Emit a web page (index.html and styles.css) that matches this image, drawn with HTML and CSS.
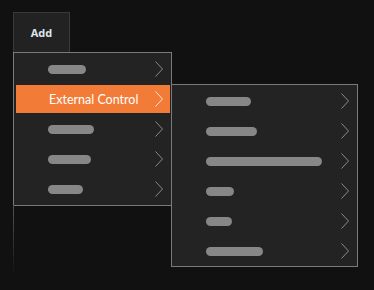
FILE: index.html
```html
<!DOCTYPE html>
<html lang="en">
  <head>
    <title>Add menu</title>
    <meta charset="utf-8">
    <link rel="stylesheet" href="styles.css">
  </head>
  <body>

  <div class="tab">Add</div>

  <div class="menu">
    <div class="item"><span class="bar" style="width:38px"></span><svg class="chev" viewBox="0 0 8 16"><polyline points="0.5,0.5 7.5,8 0.5,15.5"/></svg></div>
    <div class="item active"><span class="label">External Control</span><svg class="chev" viewBox="0 0 8 16"><polyline points="0.5,0.5 7.5,8 0.5,15.5"/></svg></div>
    <div class="item"><span class="bar" style="width:46px"></span><svg class="chev" viewBox="0 0 8 16"><polyline points="0.5,0.5 7.5,8 0.5,15.5"/></svg></div>
    <div class="item"><span class="bar" style="width:43px"></span><svg class="chev" viewBox="0 0 8 16"><polyline points="0.5,0.5 7.5,8 0.5,15.5"/></svg></div>
    <div class="item"><span class="bar" style="width:35px"></span><svg class="chev" viewBox="0 0 8 16"><polyline points="0.5,0.5 7.5,8 0.5,15.5"/></svg></div>

    <div class="menu submenu">
      <div class="item"><span class="bar" style="width:45px"></span><svg class="chev" viewBox="0 0 8 16"><polyline points="0.5,0.5 7.5,8 0.5,15.5"/></svg></div>
      <div class="item"><span class="bar" style="width:51px"></span><svg class="chev" viewBox="0 0 8 16"><polyline points="0.5,0.5 7.5,8 0.5,15.5"/></svg></div>
      <div class="item"><span class="bar" style="width:116px"></span><svg class="chev" viewBox="0 0 8 16"><polyline points="0.5,0.5 7.5,8 0.5,15.5"/></svg></div>
      <div class="item"><span class="bar" style="width:28px"></span><svg class="chev" viewBox="0 0 8 16"><polyline points="0.5,0.5 7.5,8 0.5,15.5"/></svg></div>
      <div class="item"><span class="bar" style="width:26px"></span><svg class="chev" viewBox="0 0 8 16"><polyline points="0.5,0.5 7.5,8 0.5,15.5"/></svg></div>
      <div class="item"><span class="bar" style="width:57px"></span><svg class="chev" viewBox="0 0 8 16"><polyline points="0.5,0.5 7.5,8 0.5,15.5"/></svg></div>
    </div>
  </div>

  </body>
</html>
```

FILE: styles.css
```css
html {
  height: 100%;
}
body {
  margin: 0;
  padding: 12px 0 0 13px;
  background: #111111;
  color: #ffffff;
  font-family: "Open Sans", sans-serif;
  font-size: 12px;
  height: 100%;
  box-sizing: border-box;
}

.tab {
  width: 57px;
  height: 40px;
  box-sizing: border-box;
  border: 1px solid #3a3a3a;
  border-bottom: 0;
  background: #222222;
  color: #dfe6ee;
  font-size: 11px;
  font-weight: bold;
  display: flex;
  align-items: center;
  justify-content: center;
}

.menu {
  position: relative;
  width: 159px;
  box-sizing: border-box;
  border: 1px solid #7a7a7a;
  background: #232323;
  padding: 0 0 2px;
}
.menu::after {
  content: "";
  position: absolute;
  top: 100%;
  left: -1px;
  width: 1px;
  height: 70px;
  background: linear-gradient(#555555, rgba(85, 85, 85, 0));
}

.item {
  height: 30px;
  box-sizing: border-box;
  border: solid transparent;
  border-width: 2px 1px 0 2px;
  background-clip: padding-box;
  padding: 0 7px 0 32px;
  display: flex;
  align-items: center;
  white-space: nowrap;
}
.item.active {
  background-color: #f37b38;
  color: #ffffff;
}
.label {
  font-family: Lato, "Open Sans", sans-serif;
  font-size: 12.5px;
  margin-left: 1px;
  margin-top: 1px;
}

.bar {
  height: 9px;
  border-radius: 5px;
  background: #878787;
}

.chev {
  width: 8px;
  height: 16px;
  margin-left: auto;
  fill: none;
  stroke: #8a8a8a;
  stroke-width: 1;
}
.active .chev {
  stroke: #ffe6d6;
}

.submenu {
  position: absolute;
  top: 31px;
  left: 157px;
  width: 187px;
  padding: 0 0 1px;
}
.submenu::after {
  display: none;
}
```
